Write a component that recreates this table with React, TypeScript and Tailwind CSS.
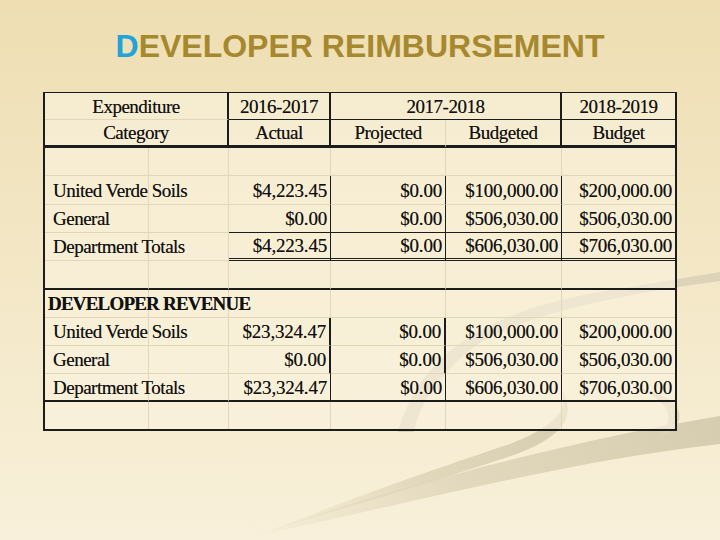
import React from "react";

type CellProps = {
  children?: React.ReactNode;
  className?: string;
  colSpan?: number;
};

// every cell draws only its own right and bottom edge
const Cell = ({ children, className = "", colSpan }: CellProps) => (
  <td
    colSpan={colSpan}
    className={`p-0 whitespace-nowrap overflow-visible align-middle text-[19px] leading-none text-[#111] [text-shadow:0_0_0.5px_rgba(0,0,0,0.55)] ${className}`}
  >
    {children}
  </td>
);

const faintR = "border-r border-r-[#e0d6ba]";
const faintB = "border-b border-b-[#e0d6ba]";
const darkR1 = "border-r border-r-[#1c1c1c]";
const darkR2 = "border-r-2 border-r-[#1c1c1c]";
const darkB1 = "border-b border-b-[#1c1c1c]";
const darkB2 = "border-b-2 border-b-[#1c1c1c]";
const headB = "border-b-[3px] border-b-[#1c1c1c]";

const label = "pl-[8px] text-left tracking-[-0.5px]";
const money = "pr-[3px] text-right tracking-[-0.2px]";
const head = "text-center tracking-[-0.5px]";

type Line = { name: string; a: string; p: string; b: string; n: string };

const expenses: Line[] = [
  { name: "United Verde Soils", a: "$4,223.45", p: "$0.00", b: "$100,000.00", n: "$200,000.00" },
  { name: "General", a: "$0.00", p: "$0.00", b: "$506,030.00", n: "$506,030.00" },
  { name: "Department Totals", a: "$4,223.45", p: "$0.00", b: "$606,030.00", n: "$706,030.00" },
];

const revenue: Line[] = [
  { name: "United Verde Soils", a: "$23,324.47", p: "$0.00", b: "$100,000.00", n: "$200,000.00" },
  { name: "General", a: "$0.00", p: "$0.00", b: "$506,030.00", n: "$506,030.00" },
  { name: "Department Totals", a: "$23,324.47", p: "$0.00", b: "$606,030.00", n: "$706,030.00" },
];

const BlankRow = ({ h, bottom, last }: { h: string; bottom: string; last?: boolean }) => (
  <tr>
    {[0, 1, 2, 3, 4, 5].map((i) => (
      <Cell key={i} className={`${h} ${i < 5 ? faintR : ""} ${last ? "" : bottom}`} />
    ))}
  </tr>
);

const Swooshes = () => (
  <svg
    className="absolute inset-0 pointer-events-none"
    width="720"
    height="540"
    viewBox="0 0 720 540"
  >
    <defs>
      <linearGradient id="fadeA" x1="245" y1="538" x2="720" y2="420" gradientUnits="userSpaceOnUse">
        <stop offset="0" stopColor="#ddd3b7" stopOpacity="0" />
        <stop offset="0.45" stopColor="#ddd3b7" stopOpacity="0.8" />
        <stop offset="1" stopColor="#d6ccb0" stopOpacity="1" />
      </linearGradient>
      <linearGradient id="fadeB" x1="272" y1="530" x2="565" y2="400" gradientUnits="userSpaceOnUse">
        <stop offset="0" stopColor="#ddd3b7" stopOpacity="0" />
        <stop offset="0.5" stopColor="#ddd3b7" stopOpacity="0.85" />
        <stop offset="1" stopColor="#d6ccb0" stopOpacity="1" />
      </linearGradient>
    </defs>
    <path fill="url(#fadeA)" d="M245 538 C380 492 560 442 720 416 L720 444 C560 462 400 506 245 538 Z" />
    <path fill="url(#fadeB)" d="M562 392 C578 416 562 440 505 458 C432 482 352 506 272 530 C362 494 444 466 510 444 C552 428 570 410 562 392 Z" />
    <g fill="#ddd3b8">
      <path d="M398 432 C418 360 480 312 600 292 C640 285 680 279 720 272 L720 281 C640 292 520 312 470 350 C440 375 420 402 414 432 Z" />
      <path d="M636 388 C684 396 694 424 658 438 C676 420 672 402 636 388 Z" />
    </g>
  </svg>
);

export default function App() {
  return (
    <div className="relative w-[720px] h-[540px] overflow-hidden bg-linear-to-b from-[#eedeb2] to-[#f8f0da]">
      <Swooshes />
      <div className="relative flex flex-col">
        <h1 className="self-center pt-[30px] text-[32px] leading-none font-bold font-['Liberation_Sans',Arial,sans-serif] text-[#a6882f]">
          <span className="text-[#22a3d9]">D</span>EVELOPER REIMBURSEMENT
        </h1>

        <div className="mt-[30px] ml-[43px] w-[634px] border-2 border-t border-[#1c1c1c] bg-[#faf3df]/60 font-['Liberation_Serif','Times_New_Roman',serif]">
          <table className="w-full table-fixed border-separate border-spacing-0">
            <colgroup>
              <col className="w-[104px]" />
              <col className="w-[80px]" />
              <col className="w-[102px]" />
              <col className="w-[115px]" />
              <col className="w-[116px]" />
              <col className="w-[113px]" />
            </colgroup>
            <tbody>
              <tr>
                <Cell colSpan={2} className={`h-[27px] ${darkR2} ${faintB} ${head}`}>
                  Expenditure
                </Cell>
                <Cell className={`h-[27px] ${darkR2} ${darkB1} ${head}`}>2016-2017</Cell>
                <Cell colSpan={2} className={`h-[27px] ${darkR2} ${darkB1} ${head}`}>
                  2017-2018
                </Cell>
                <Cell className={`h-[27px] ${darkB1} ${head}`}>2018-2019</Cell>
              </tr>
              <tr>
                <Cell colSpan={2} className={`h-[28px] ${darkR2} ${headB} ${head}`}>
                  Category
                </Cell>
                <Cell className={`h-[28px] ${darkR2} ${headB} ${head}`}>Actual</Cell>
                <Cell className={`h-[28px] ${faintR} ${headB} ${head}`}>Projected</Cell>
                <Cell className={`h-[28px] ${darkR2} ${headB} ${head}`}>Budgeted</Cell>
                <Cell className={`h-[28px] ${headB} ${head}`}>Budget</Cell>
              </tr>

              <BlankRow h="h-[28px]" bottom={faintB} />

              {expenses.map((r, i) => {
                const h = i === 0 ? "h-[29px]" : "h-[28px]";
                const numB =
                  i === 1
                    ? darkB1
                    : i === 2
                    ? "border-b-[3px] border-double border-b-[#1c1c1c]"
                    : faintB;
                return (
                  <tr key={r.name}>
                    <Cell className={`${h} ${faintR} ${faintB} ${label}`}>{r.name}</Cell>
                    <Cell className={`${h} ${faintR} ${faintB}`} />
                    <Cell className={`${h} ${darkR1} ${numB} ${money}`}>{r.a}</Cell>
                    <Cell className={`${h} ${darkR1} ${numB} ${money}`}>{r.p}</Cell>
                    <Cell className={`${h} ${darkR1} ${numB} ${money}`}>{r.b}</Cell>
                    <Cell className={`${h} ${numB} ${money}`}>{r.n}</Cell>
                  </tr>
                );
              })}

              <BlankRow h="h-[29px]" bottom={darkB2} />

              <tr>
                <Cell className={`h-[28px] ${faintR} ${faintB} pl-[3px] font-bold tracking-[-0.8px]`}>
                  DEVELOPER REVENUE
                </Cell>
                <Cell className={`h-[28px] ${faintR} ${faintB}`} />
                <Cell className={`h-[28px] ${faintR} ${faintB}`} />
                <Cell className={`h-[28px] ${faintR} ${faintB}`} />
                <Cell className={`h-[28px] ${faintR} ${faintB}`} />
                <Cell className={`h-[28px] ${faintB}`} />
              </tr>

              {revenue.map((r, i) => {
                const last = i === 2;
                const b = last ? darkB2 : faintB;
                const vr = last ? darkR1 : darkR2;
                return (
                  <tr key={"rev" + r.name}>
                    <Cell className={`h-[28px] ${faintR} ${b} ${label}`}>{r.name}</Cell>
                    <Cell className={`h-[28px] ${faintR} ${b}`} />
                    <Cell className={`h-[28px] ${vr} ${b} ${money}`}>{r.a}</Cell>
                    <Cell className={`h-[28px] ${vr} ${b} ${money}`}>{r.p}</Cell>
                    <Cell className={`h-[28px] ${darkR1} ${b} ${money}`}>{r.b}</Cell>
                    <Cell className={`h-[28px] ${b} ${money}`}>{r.n}</Cell>
                  </tr>
                );
              })}

              <BlankRow h="h-[27px]" bottom={faintB} last />
            </tbody>
          </table>
        </div>
      </div>
    </div>
  );
}
